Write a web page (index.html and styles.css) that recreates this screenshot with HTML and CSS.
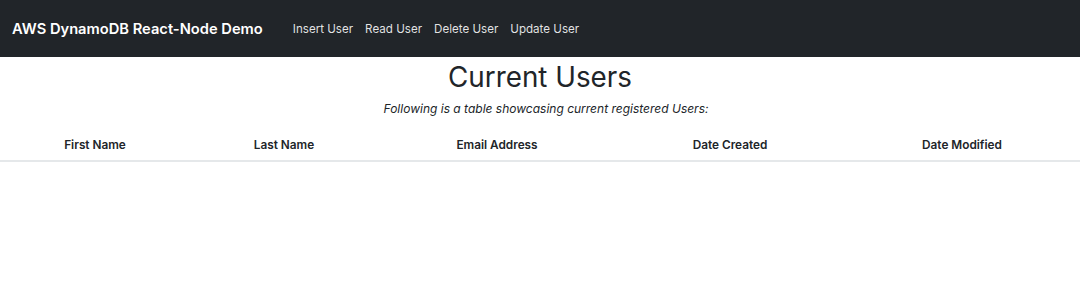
FILE: index.html
```html
<!DOCTYPE html>
<html>
<head>
<meta charset="utf-8">
<link rel="stylesheet" href="styles.css">
</head>
<body>
<nav class="navbar">
  <a class="brand" href="#">AWS DynamoDB React-Node Demo</a>
  <div class="nav-links">
    <a href="#">Insert User</a>
    <a href="#">Read User</a>
    <a href="#">Delete User</a>
    <a href="#">Update User</a>
  </div>
</nav>
<main class="content">
  <h1 class="title">Current Users</h1>
  <p class="subtitle">Following is a table showcasing current registered Users:</p>
  <div class="table">
    <div class="th">First Name</div>
    <div class="th">Last Name</div>
    <div class="th">Email Address</div>
    <div class="th">Date Created</div>
    <div class="th">Date Modified</div>
  </div>
</main>
</body>
</html>
```
FILE: styles.css
```css
* { box-sizing: border-box; }
html, body { margin: 0; padding: 0; background: #fff; }
body { font-family: Inter, "Noto Sans", sans-serif; color: #212529; }
a { text-decoration: none; }
.navbar {
  height: 57px;
  background: #212529;
  display: flex;
  align-items: center;
  padding: 0 12px;
}
.brand {
  color: #fff;
  font-size: 14.7px;
  font-weight: 600;
  margin-right: 30px;
}
.nav-links { display: flex; gap: 12px; }
.nav-links a {
  color: rgba(255,255,255,0.88);
  font-size: 11.6px;
}
.content { text-align: center; }
.title {
  margin: 2px 0 0;
  font-size: 27.8px;
  font-weight: 400;
  line-height: 36px;
}
.subtitle {
  margin: 5px 0 0;
  padding-left: 12px;
  font-size: 12px;
  font-style: italic;
  line-height: 18px;
}
.table {
  margin-top: 12px;
  display: grid;
  grid-template-columns: 190px 188px 238px 228px 236px;
  border-bottom: 2px solid #e5e8ea;
}
.th {
  font-size: 11.8px;
  font-weight: 600;
  padding: 8px 0 7px;
  line-height: 15px;
}
```
